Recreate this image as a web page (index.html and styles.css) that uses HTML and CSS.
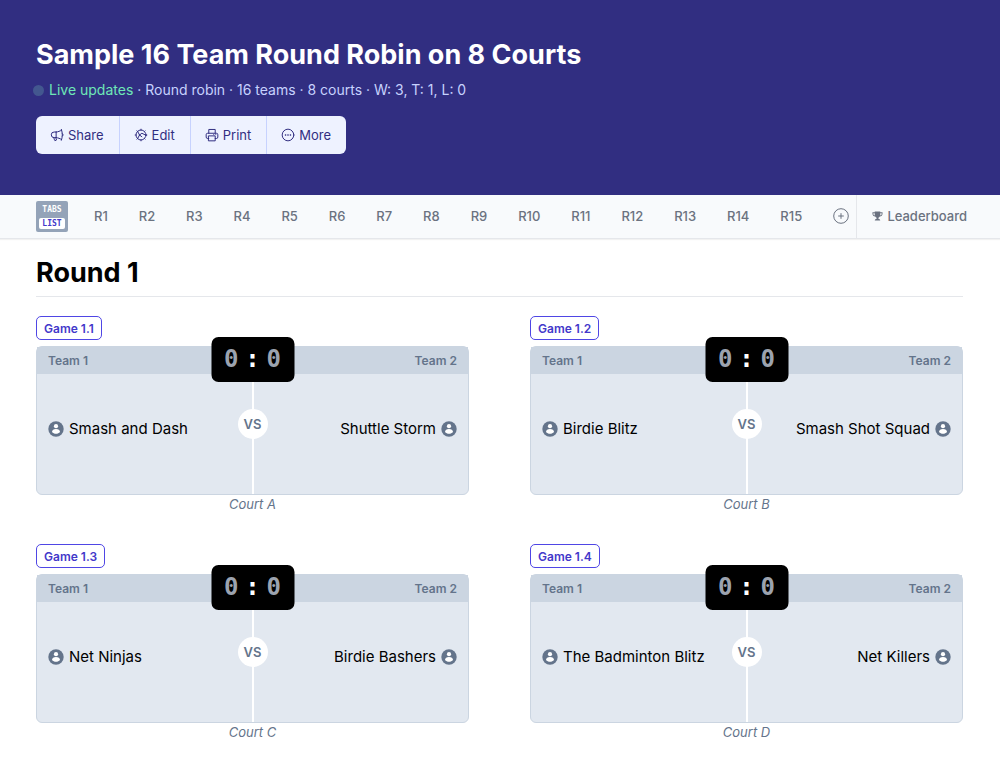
FILE: index.html
```html
<!DOCTYPE html>
<html lang="en">
<head>
<meta charset="utf-8">
<meta name="viewport" content="width=device-width, initial-scale=1">
<title>Sample 16 Team Round Robin on 8 Courts</title>
<link rel="stylesheet" href="styles.css">
</head>
<body>
<svg class="sprite" aria-hidden="true">
  <symbol id="user" viewBox="0 0 16 16">
    <circle cx="8" cy="8" r="7.7" fill="#64748b"/>
    <circle cx="8" cy="5.200" r="2.100" fill="#fff"/>
    <path d="M4 11c0-1.900 1.700-3 4-3s4 1.100 4 3c-1 1.200-2.400 1.800-4 1.800S5 12.200 4 11z" fill="#fff"/>
  </symbol>
</svg>
<header class="hero">
  <h1 class="hero-title">Sample 16 Team Round Robin on 8 Courts</h1>
  <p class="hero-meta"><span class="live-dot"></span><span><span class="live">Live updates</span> · Round robin · 16 teams · 8 courts · W: 3, T: 1, L: 0</span></p>
  <div class="actions">
    <button class="action" type="button">
      <svg class="action-icon" viewBox="0 0 24 24"><path d="M10.500 16.500H7a4.800 4.800 0 0 1 0-9.600h3.500M10.500 6.900v9.600M10.500 6.900c3.500-.300 6.500-1.400 9.500-3.400M10.500 16.500c3.500.300 6.500 1.400 9.500 3.400M19.500 2.500c2.200 6 2.200 12.500 0 18.500M6.500 16.500c.400 2 1 3.700 1.900 5.200l2.900-1.200c-.700-1.200-1.100-2.500-1.300-4M21.500 9.800c1.200 1 1.200 2.900 0 3.900"/></svg>Share</button>
    <button class="action" type="button">
      <svg class="action-icon" viewBox="0 0 24 24"><circle cx="12" cy="12" r="8.500"/><path d="M9.500 12 6 5.500M9.500 12 6 18.500M9.500 12l4-3 7 3.500M9.500 12l4 3M12 3.500V2M12 22v-1.500M3.500 12H2M6 6 5 5M6 18l-1 1M18 6l1-1M18 18l1 1M22 12h-1.500"/></svg>Edit</button>
    <button class="action" type="button">
      <svg class="action-icon" viewBox="0 0 24 24"><path d="M6.500 9V2.500h11V9M6.500 18H4.500A2.500 2.500 0 0 1 2 15.500v-4A2.500 2.500 0 0 1 4.500 9h15a2.500 2.500 0 0 1 2.500 2.500v4a2.500 2.500 0 0 1-2.500 2.500h-2M6.500 13.500h11V22h-11zM15 11.300h.100M18.500 11.300h.100"/></svg>Print</button>
    <button class="action" type="button">
      <svg class="action-icon" viewBox="0 0 24 24"><circle cx="12" cy="12" r="10"/><path d="M7.500 12h.600M11.700 12h.600M15.900 12h.600" stroke-width="2.200"/></svg>More</button>
  </div>
</header>
<nav class="tabs">
  <button class="view-toggle" type="button"><span>TABS</span><span class="view-current">LIST</span></button>
  <div class="rounds">
    <a href="#r1">R1</a><a href="#r2">R2</a><a href="#r3">R3</a><a href="#r4">R4</a><a href="#r5">R5</a><a href="#r6">R6</a><a href="#r7">R7</a><a href="#r8">R8</a><a href="#r9">R9</a><a href="#r10">R10</a><a href="#r11">R11</a><a href="#r12">R12</a><a href="#r13">R13</a><a href="#r14">R14</a><a href="#r15">R15</a>
  </div>
  <button class="add" type="button" aria-label="Add round"><svg viewBox="0 0 16 16"><circle cx="8" cy="8" r="7.300"/><path d="M8 5.200v5.600M5.200 8h5.600"/></svg></button>
  <a class="leaderboard" href="#leaderboard"><svg viewBox="0 0 24 24"><path d="M6 2h12v2h5v3c0 3.500-2.500 6-6 6.300-.800 1.200-1.800 2-3 2.400V18c2 .300 3.500 1.500 4 4H6c.500-2.500 2-3.700 4-4v-2.300c-1.200-.400-2.200-1.200-3-2.400C3.500 13 1 10.500 1 7V4h5zM3 6v1c0 2 1 3.500 3 4V6zm18 0h-3v5c2-.500 3-2 3-4z" fill-rule="evenodd"/></svg>Leaderboard</a>
</nav>
<main class="round" id="r1">
  <h2 class="round-title">Round 1</h2>
  <div class="games">
    <article class="game">
      <a class="game-name" href="#g1">Game 1.1</a>
      <div class="card">
        <div class="card-head"><span>Team 1</span><span>Team 2</span></div>
        <button class="score" type="button"><span>0</span><b>:</b><span>0</span></button>
        <div class="card-body"><span class="team"><svg><use href="#user"/></svg>Smash and Dash</span><span class="team">Shuttle Storm<svg><use href="#user"/></svg></span><span class="vs">VS</span></div>
      </div>
      <p class="court">Court A</p>
    </article>
    <article class="game">
      <a class="game-name" href="#g2">Game 1.2</a>
      <div class="card">
        <div class="card-head"><span>Team 1</span><span>Team 2</span></div>
        <button class="score" type="button"><span>0</span><b>:</b><span>0</span></button>
        <div class="card-body"><span class="team"><svg><use href="#user"/></svg>Birdie Blitz</span><span class="team">Smash Shot Squad<svg><use href="#user"/></svg></span><span class="vs">VS</span></div>
      </div>
      <p class="court">Court B</p>
    </article>
    <article class="game">
      <a class="game-name" href="#g3">Game 1.3</a>
      <div class="card">
        <div class="card-head"><span>Team 1</span><span>Team 2</span></div>
        <button class="score" type="button"><span>0</span><b>:</b><span>0</span></button>
        <div class="card-body"><span class="team"><svg><use href="#user"/></svg>Net Ninjas</span><span class="team">Birdie Bashers<svg><use href="#user"/></svg></span><span class="vs">VS</span></div>
      </div>
      <p class="court">Court C</p>
    </article>
    <article class="game">
      <a class="game-name" href="#g4">Game 1.4</a>
      <div class="card">
        <div class="card-head"><span>Team 1</span><span>Team 2</span></div>
        <button class="score" type="button"><span>0</span><b>:</b><span>0</span></button>
        <div class="card-body"><span class="team"><svg><use href="#user"/></svg>The Badminton Blitz</span><span class="team">Net Killers<svg><use href="#user"/></svg></span><span class="vs">VS</span></div>
      </div>
      <p class="court">Court D</p>
    </article>
  </div>
</main>
</body>
</html>
```
FILE: styles.css
```css
* { box-sizing: border-box; }
body { margin: 0; background: #fff; color: #000; font: 15px/20px Inter, sans-serif; }
h1, h2, p { margin: 0; }
a { color: inherit; text-decoration: none; }
button { margin: 0; border: 0; font: inherit; color: inherit; cursor: pointer; }
.sprite { display: none; }

.hero { background: #312e81; padding: 37px 36px 41px; }
.hero-title { color: #fff; font-size: 27px; line-height: 36px; font-weight: 700; }
.hero-meta { display: flex; align-items: center; gap: 5px; margin: 7px 0 16px -3px; color: #c7d2fe; font-size: 14px; }
.live-dot { width: 11px; height: 11px; border-radius: 50%; background: #43578f; }
.live { color: #6ee7b7; }
.actions { display: inline-flex; border-radius: 6px; overflow: hidden; background: #eef2ff; color: #312e81; vertical-align: top; }
.action { display: flex; align-items: center; gap: 4px; height: 38px; padding: 0 15px 0 14px; background: none; font-size: 13px; }
.action + .action { border-left: 1px solid #c7d2fe; }
.action-icon { width: 14px; height: 14px; fill: none; stroke: currentColor; stroke-width: 1.7; stroke-linecap: round; stroke-linejoin: round; }

.tabs { display: flex; align-items: center; height: 44px; padding-left: 36px; background: #f8fafc; border-bottom: 1px solid #e5e7eb; box-shadow: 0 1px 1px #0000000d; color: #6b7280; font-size: 13px; font-weight: 500; }
.view-toggle { display: flex; flex-direction: column; justify-content: space-between; width: 32px; height: 31px; padding: 3px; border-radius: 2px; background: #94a3b8; color: #fff; font: 700 8px/11px "DejaVu Sans Mono", monospace; text-align: center; }
.view-current { border-radius: 2px; background: #fff; color: #4338ca; }
.rounds { display: flex; flex: 1; justify-content: space-between; padding: 0 31px 2px 26px; }
.add { display: flex; padding: 0 7px 2px 0; background: none; }
.add svg { width: 16px; height: 16px; fill: none; stroke: currentColor; }
.leaderboard { display: flex; align-items: center; gap: 4px; align-self: stretch; padding: 0 33px 2px 15px; border-left: 1px solid #e5e7eb; }
.leaderboard svg { width: 11px; height: 12px; fill: currentColor; }

.round { padding: 16px 37px 20px 36px; }
.round-title { padding-bottom: 5px; border-bottom: 1px solid #e5e7eb; font-size: 27px; line-height: 36px; font-weight: 700; }
.games { display: grid; grid-template-columns: repeat(2, minmax(0, 1fr)); gap: 30px 61px; margin-top: 19px; }
.game { display: flex; flex-direction: column; align-items: flex-start; }
.game-name { height: 24px; margin-bottom: 6px; padding: 0 7px; border: 1px solid #4f46e5; border-radius: 5px; color: #4338ca; font-size: 12px; line-height: 23px; font-weight: 600; }
.card { position: relative; width: 100%; border: 1px solid #cbd5e1; border-radius: 6px; background: #e2e8f0; }
.card-head { display: flex; justify-content: space-between; height: 27px; padding: 0 11px; background: #cbd5e1; color: #64748b; font-size: 12px; line-height: 27px; font-weight: 600; }
.score { position: absolute; top: -10px; left: 50%; transform: translateX(-50%); display: flex; align-items: center; justify-content: space-between; width: 83px; height: 45px; padding: 0 13px; border-radius: 7px; background: #000; color: #9ca3af; font: 700 24px/45px "DejaVu Sans Mono", monospace; z-index: 1; }
.score b { color: #fff; }
.card-body { position: relative; display: flex; align-items: center; justify-content: space-between; height: 120px; padding: 0 11px 11px; background: linear-gradient(#fff, #fff) center / 2px 100% no-repeat; }
.team { display: flex; align-items: center; gap: 5px; }
.team svg { width: 16px; height: 16px; }
.vs { position: absolute; top: 35px; left: 50%; width: 30px; height: 30px; margin-left: -15px; border-radius: 50%; background: #fff; color: #64748b; font-size: 13px; line-height: 30px; font-weight: 600; text-align: center; }
.court { align-self: center; color: #64748b; font-size: 13px; line-height: 19px; font-style: italic; }
```
